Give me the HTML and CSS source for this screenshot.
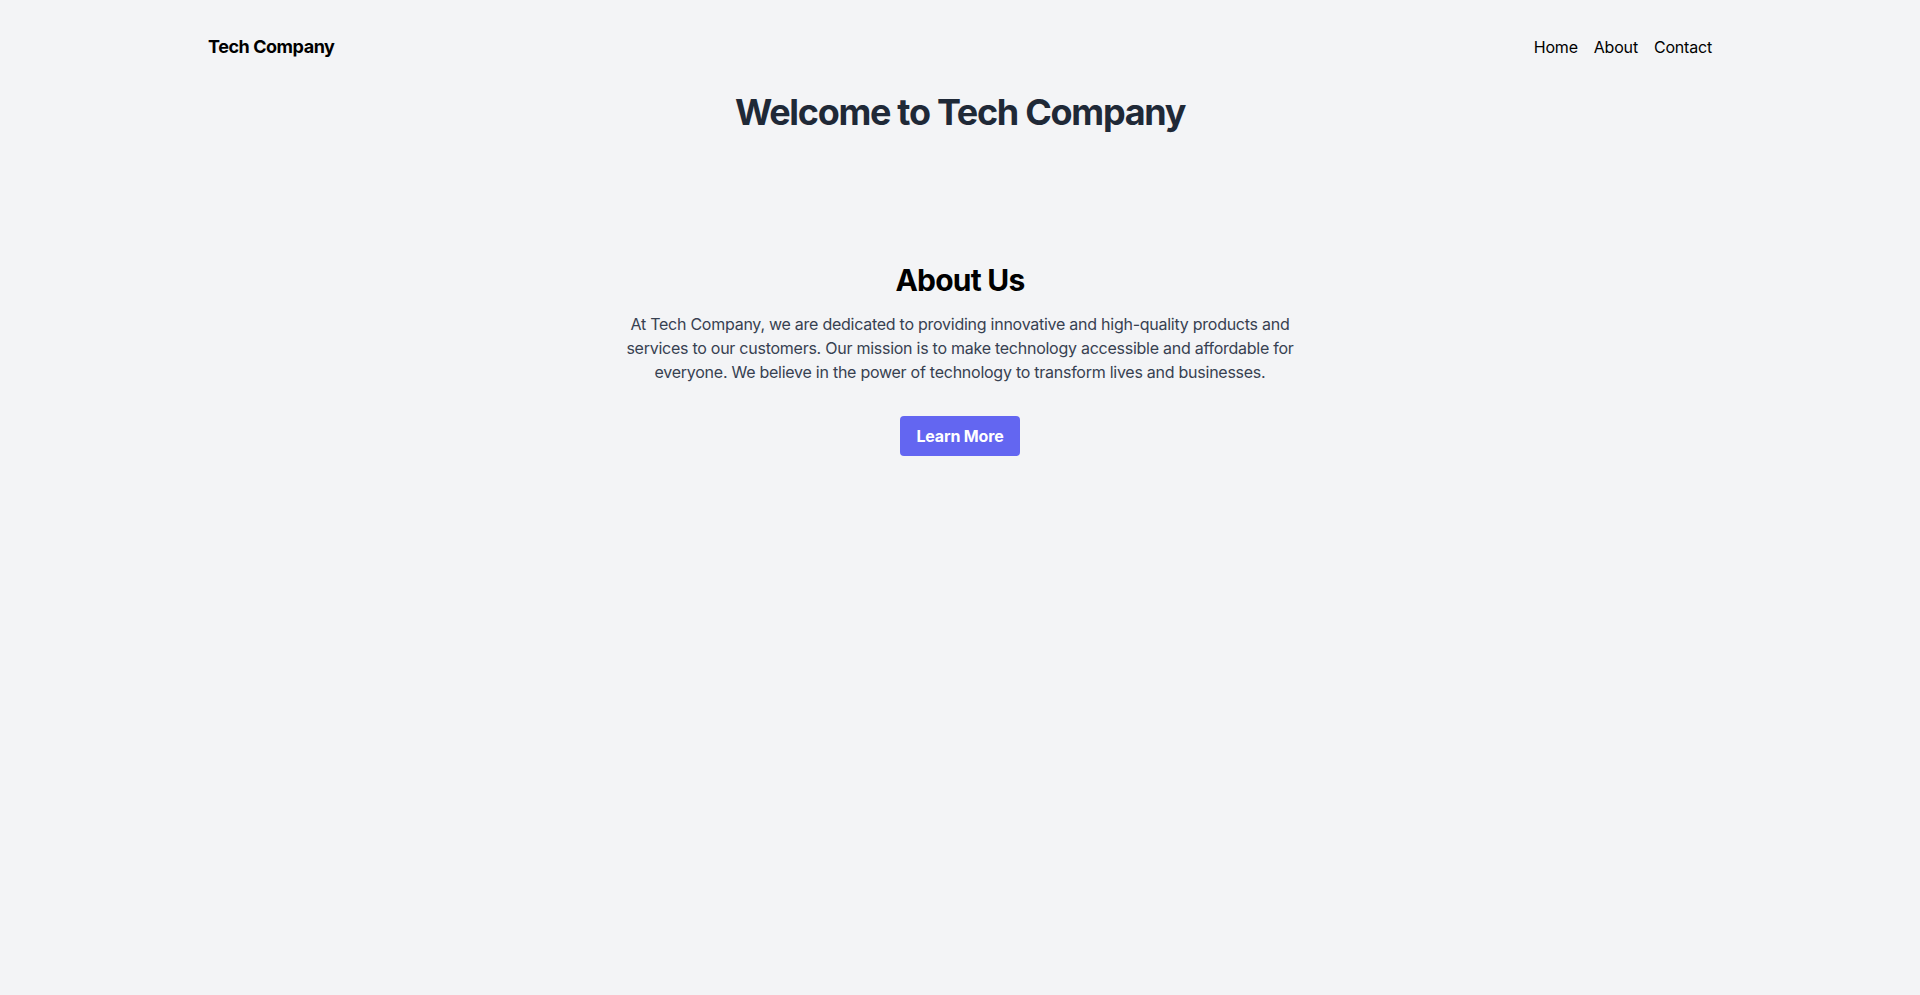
FILE: index.html
```html
<!DOCTYPE html>
<html lang="en">
<head>
<meta charset="utf-8">
<title>Tech Company</title>
<link rel="stylesheet" href="styles.css">
</head>
<body>
<header class="header">
  <div class="container header-inner">
    <div class="logo">Tech Company</div>
    <nav class="nav">
      <a href="#" class="nav-link">Home</a>
      <a href="#" class="nav-link">About</a>
      <a href="#" class="nav-link">Contact</a>
    </nav>
  </div>
</header>
<main>
  <h1 class="hero-title">Welcome to Tech Company</h1>
  <section class="about">
    <h2 class="about-title">About Us</h2>
    <p class="about-text">At Tech Company, we are dedicated to providing innovative and high-quality products and services to our customers. Our mission is to make technology accessible and affordable for everyone. We believe in the power of technology to transform lives and businesses.</p>
    <a href="#" class="btn">Learn More</a>
  </section>
</main>
</body>
</html>
```

FILE: styles.css
```css
* { box-sizing: border-box; }
html, body { margin: 0; padding: 0; }
body {
  background: #f3f4f6;
  font-family: Inter, "Noto Sans", sans-serif;
  color: #000;
  min-height: 100vh;
}
.container {
  max-width: 1536px;
  margin: 0 auto;
  padding: 0 16px;
}
.header { padding: 33px 0 31px; }
.header-inner {
  display: flex;
  justify-content: space-between;
  align-items: center;
}
.logo {
  font-size: 18px;
  line-height: 28px;
  font-weight: 700;
  letter-spacing: -0.025em;
}
.nav { display: flex; gap: 16px; }
.nav-link {
  color: #000;
  text-decoration: none;
  font-size: 16px;
  line-height: 24px;
  letter-spacing: -0.012em;
}
.hero-title {
  margin: 0;
  text-align: center;
  font-size: 36px;
  line-height: 40px;
  font-weight: 700;
  color: #1f2937;
  letter-spacing: -0.036em;
}
.about {
  padding-top: 130px;
  display: flex;
  flex-direction: column;
  align-items: center;
  text-align: center;
}
.about-title {
  margin: 0 0 14px;
  font-size: 30px;
  line-height: 36px;
  font-weight: 700;
  letter-spacing: -0.025em;
}
.about-text {
  margin: 0;
  max-width: 682px;
  font-size: 16px;
  line-height: 24px;
  color: #374151;
  letter-spacing: -0.016em;
}
.btn {
  margin-top: 32px;
  display: inline-block;
  background: #6366f1;
  color: #fff;
  font-weight: 700;
  font-size: 16px;
  line-height: 24px;
  padding: 8px 16px;
  border-radius: 4px;
  text-decoration: none;
  letter-spacing: -0.01em;
}
```
